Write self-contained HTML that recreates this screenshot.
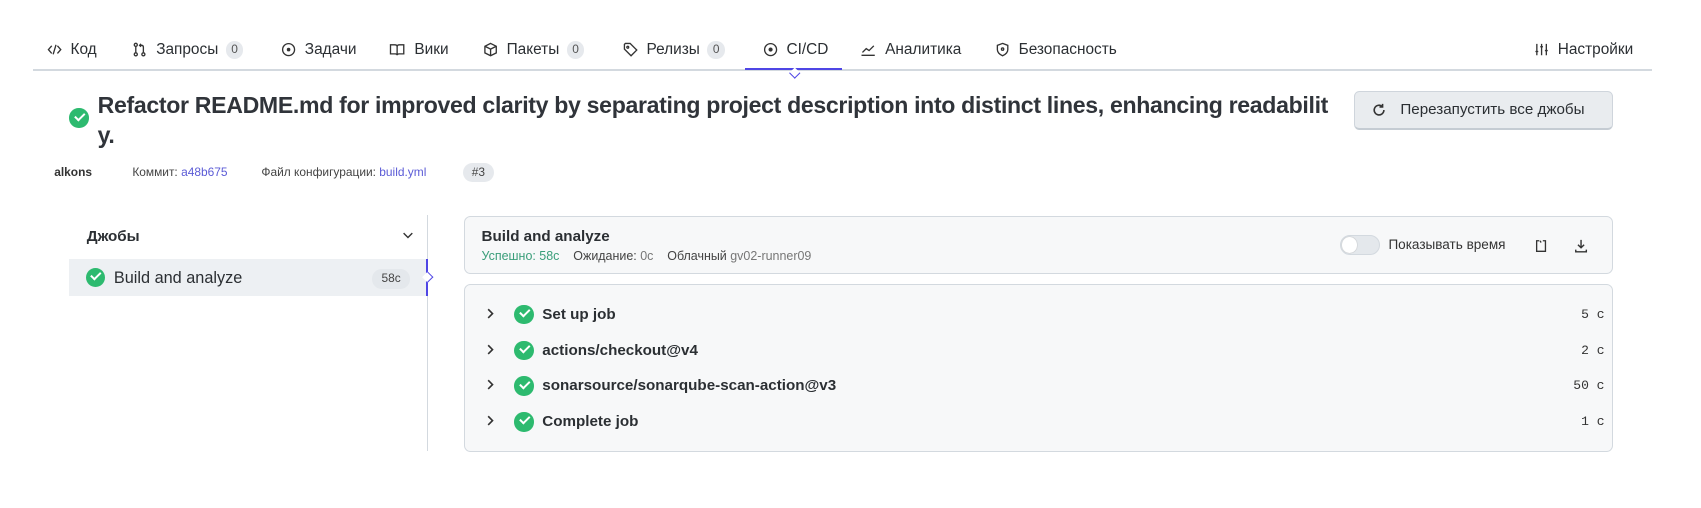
<!DOCTYPE html>
<html><head><meta charset="utf-8"><style>
html,body{margin:0;padding:0;background:#fff;width:1701px;height:508px;overflow:hidden}
#r{zoom:1.0848;position:relative;width:1568px;height:469px;font-family:"Liberation Sans","DejaVu Sans",sans-serif;color:#333}
.a{position:absolute;white-space:nowrap}
.tab{position:absolute;top:38px;font-size:14.2px;color:#2b2f33;line-height:16px;display:flex;align-items:center}
.tab svg{margin-right:8px}
.bd{display:inline-block;background:#e6e9ed;border-radius:8px;font-size:11px;color:#555;height:16px;line-height:16px;padding:0 5px;margin-left:7px}
.chk{position:absolute;width:18px;height:18px;border-radius:50%;background:#2dba6f}
.chk:after{content:"";position:absolute;left:5px;top:4px;width:7px;height:4px;border-left:2px solid #fff;border-bottom:2px solid #fff;transform:rotate(-45deg)}
.card{position:absolute;left:428px;width:1059px;background:#f7f8f9;border:1px solid #d3d9df;border-radius:6px;box-sizing:border-box}
.step{position:absolute;left:0;width:100%;height:20px}
.step .t{position:absolute;left:71px;top:2px;font-size:14px;font-weight:bold;color:#2b2f33}
.step .c{position:absolute;left:19px;top:2px}
.step .chk{left:45px;top:1px}
.step .d{position:absolute;right:7px;top:3px;font-family:"Liberation Mono",monospace;font-size:12px;color:#333}
a{color:#5b5bd6;text-decoration:none}
</style></head><body><div id="r">
<div class="tab" style="left:43px"><svg width="14" height="14" viewBox="0 0 16 16" fill="none" stroke="#333" stroke-width="1.4"><path d="M5 4L1.5 8 5 12M11 4l3.5 4L11 12M9.5 3l-3 10"/></svg>Код</div>
<div class="tab" style="left:122px"><svg width="14" height="14" viewBox="0 0 16 16" fill="none" stroke="#333" stroke-width="1.4"><circle cx="4" cy="3" r="1.6"/><circle cx="4" cy="13" r="1.6"/><circle cx="12" cy="13" r="1.6"/><path d="M4 5v6M12 11V5.5Q12 3.5 10 3.5H8M9.5 2L8 3.5 9.5 5"/></svg>Запросы<span class="bd">0</span></div>
<div class="tab" style="left:259px"><svg width="14" height="14" viewBox="0 0 16 16" fill="none" stroke="#333" stroke-width="1.4"><circle cx="8" cy="8" r="6.3"/><circle cx="8" cy="8" r="1.2" fill="#333"/></svg>Задачи</div>
<div class="tab" style="left:359px"><svg width="15" height="14" viewBox="0 0 16 16" fill="none" stroke="#333" stroke-width="1.4"><path d="M1 3h4.5Q8 3 8 5v9Q8 12.5 6 12.5H1zM15 3h-4.5Q8 3 8 5v9Q8 12.5 10 12.5H15z"/></svg>Вики</div>
<div class="tab" style="left:445px"><svg width="14" height="14" viewBox="0 0 16 16" fill="none" stroke="#333" stroke-width="1.4"><path d="M8 1.5l6 3v7l-6 3-6-3v-7zM2 4.5l6 3 6-3M8 7.5v7"/></svg>Пакеты<span class="bd">0</span></div>
<div class="tab" style="left:574px"><svg width="14" height="14" viewBox="0 0 16 16" fill="none" stroke="#333" stroke-width="1.4"><path d="M1.5 2.5v5l7 7 6-6-7-7h-5z"/><circle cx="5" cy="5.5" r="1"/></svg>Релизы<span class="bd">0</span></div>
<div class="tab" style="left:703px"><svg width="14" height="14" viewBox="0 0 16 16" fill="none" stroke="#333" stroke-width="1.4"><circle cx="8" cy="8" r="6.3"/><circle cx="8" cy="8" r="1.5" fill="#333"/></svg>CI/CD</div>
<div class="tab" style="left:793px"><svg width="15" height="14" viewBox="0 0 16 16" fill="none" stroke="#333" stroke-width="1.4"><path d="M1 14h14M2 11l4-4 3 2 5-5"/></svg>Аналитика</div>
<div class="tab" style="left:917px"><svg width="14" height="14" viewBox="0 0 16 16" fill="none" stroke="#333" stroke-width="1.4"><path d="M8 1.5l5.5 2v4.5Q13.5 12 8 14.5 2.5 12 2.5 8V3.5z"/><circle cx="8" cy="7.5" r="1.2"/></svg>Безопасность</div>
<div class="tab" style="left:1414px"><svg width="14" height="14" viewBox="0 0 16 16" fill="none" stroke="#333" stroke-width="1.4"><path d="M3 2v12M8 2v12M13 2v12M1.5 10h3M6.5 5h3M11.5 9h3"/></svg>Настройки</div>
<div class="a" style="left:30px;top:64px;width:1493px;height:1px;background:#d3d9df"></div>
<div class="a" style="left:687px;top:63px;width:89px;height:2px;background:#4f46e5"></div>
<div class="a" style="left:729px;top:64px;width:6px;height:6px;border-right:1.5px solid #4f46e5;border-bottom:1.5px solid #4f46e5;background:#fff;transform:rotate(45deg)"></div>
<div class="chk" style="left:64px;top:100px"></div>
<div class="a" style="left:90px;top:83px;font-size:21.3px;font-weight:bold;color:#30343a;line-height:28px;letter-spacing:-0.3px">Refactor README.md for improved clarity by separating project description into distinct lines, enhancing readabilit<br>y.</div>
<div class="a" style="left:1248px;top:84px;width:239px;height:36px;box-sizing:border-box;background:#e9ecef;border:1px solid #cfd5dc;border-bottom:2px solid #c5ccd3;border-radius:5px;font-size:14px;color:#2b2f33;line-height:33px">
<svg style="position:absolute;left:16px;top:10px" width="13" height="13" viewBox="0 0 16 16" fill="none" stroke="#333" stroke-width="1.8"><path d="M13.5 8A5.5 5.5 0 1 1 11.5 3.8"/><path d="M12 1v3.5H8.5" /></svg>
<span style="position:absolute;left:42px">Перезапустить все джобы</span></div>
<div class="a" style="left:50px;top:152px;font-size:11px;color:#333"><b>alkons</b></div>
<div class="a" style="left:122px;top:152px;font-size:11px;color:#444">Коммит: <a>a48b675</a></div>
<div class="a" style="left:241px;top:152px;font-size:11px;color:#444">Файл конфигурации: <a>build.yml</a></div>
<div class="a" style="left:427px;top:150px;width:28px;height:18px;background:#e6e9ed;border-radius:9px;font-size:11px;color:#444;text-align:center;line-height:18px">#3</div>
<div class="a" style="left:80px;top:210px;font-size:14px;font-weight:bold;color:#2b2f33">Джобы</div>
<svg class="a" style="left:371px;top:213px" width="11" height="8" viewBox="0 0 11 8" fill="none" stroke="#333" stroke-width="1.3"><path d="M1.5 2l4 4 4-4"/></svg>
<div class="a" style="left:64px;top:239px;width:330px;height:34px;background:#edf0f3"></div>
<div class="chk" style="left:79px;top:247px"></div>
<div class="a" style="left:105px;top:248px;font-size:15px;color:#2b2f33">Build and analyze</div>
<div class="a" style="left:343px;top:248px;width:35px;height:18px;border-radius:9px;background:#e4e8ec;font-size:11px;color:#444;text-align:center;line-height:18px">58с</div>
<div class="a" style="left:394px;top:198px;width:1px;height:218px;background:#d3d9df"></div>
<div class="a" style="left:393px;top:239px;width:2px;height:34px;background:#4f46e5"></div>
<div class="a" style="left:391px;top:252px;width:6px;height:6px;border-right:1.5px solid #4f46e5;border-top:1.5px solid #4f46e5;background:#fff;transform:rotate(45deg)"></div>
<div class="card" style="top:199px;height:54px">
<div class="a" style="left:15px;top:10px;font-size:14px;font-weight:bold;color:#2b2f33">Build and analyze</div>
<div class="a" style="left:15px;top:30px;font-size:11.5px;color:#444"><span style="color:#3a9e7a">Успешно: 58с</span>&nbsp;&nbsp;&nbsp;&nbsp;Ожидание: <span style="color:#777">0с</span>&nbsp;&nbsp;&nbsp;&nbsp;Облачный <span style="color:#777">gv02-runner09</span></div>
<div class="a" style="left:806px;top:17px;width:37px;height:18px;border-radius:10px;background:#e4e8ec;border:1px solid #d3d9df;box-sizing:border-box"><div style="position:absolute;left:1px;top:1px;width:14px;height:14px;border-radius:50%;background:#fff;box-shadow:0 0 1px #999"></div></div>
<div class="a" style="left:851px;top:19px;font-size:12.5px;color:#333">Показывать время</div>
<svg class="a" style="left:985px;top:20px" width="13" height="13" viewBox="0 0 16 16" fill="none" stroke="#333" stroke-width="1.5"><path d="M6 2H3v12h10V2h-3M7 2l1 2"/></svg>
<svg class="a" style="left:1022px;top:20px" width="13" height="13" viewBox="0 0 16 16" fill="none" stroke="#333" stroke-width="1.6"><path d="M8 1v9M4.5 6.5L8 10l3.5-3.5M2 12v2.5h12V12"/></svg>
</div>
<div class="card" style="top:262px;height:155px">
<div class="step" style="top:17px"><svg class="c" width="8" height="14" viewBox="0 0 8 14" fill="none" stroke="#333" stroke-width="1.5"><path d="M2 3l4 4-4 4"/></svg><div class="chk"></div><span class="t">Set up job</span><span class="d">5 с</span></div>
<div class="step" style="top:50px"><svg class="c" width="8" height="14" viewBox="0 0 8 14" fill="none" stroke="#333" stroke-width="1.5"><path d="M2 3l4 4-4 4"/></svg><div class="chk"></div><span class="t">actions/checkout@v4</span><span class="d">2 с</span></div>
<div class="step" style="top:83px"><svg class="c" width="8" height="14" viewBox="0 0 8 14" fill="none" stroke="#333" stroke-width="1.5"><path d="M2 3l4 4-4 4"/></svg><div class="chk"></div><span class="t">sonarsource/sonarqube-scan-action@v3</span><span class="d">50 с</span></div>
<div class="step" style="top:116px"><svg class="c" width="8" height="14" viewBox="0 0 8 14" fill="none" stroke="#333" stroke-width="1.5"><path d="M2 3l4 4-4 4"/></svg><div class="chk"></div><span class="t">Complete job</span><span class="d">1 с</span></div>
</div>
</div></body></html>
